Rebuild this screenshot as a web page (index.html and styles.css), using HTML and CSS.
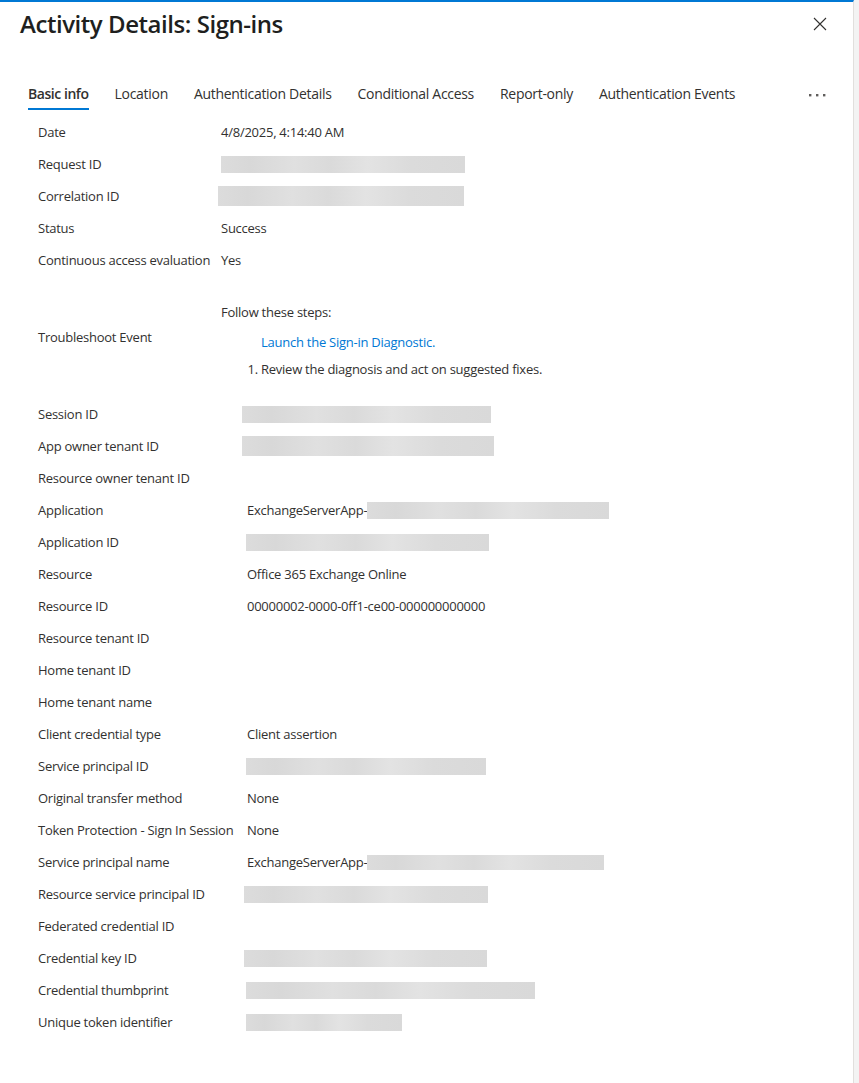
FILE: index.html
```
<!DOCTYPE html>
<html lang="en">
<head>
    <meta charset="UTF-8">
    <meta name="viewport" content="width=device-width, initial-scale=1.0">
    <title>Activity Details: Sign-ins</title>
    <link rel="stylesheet" href="styles.css">
</head>
<body>
    <div class="panel">
        <div class="panel-header">
            <h1 class="panel-title">Activity Details: Sign-ins</h1>
            <button class="close-btn" aria-label="Close">
                <svg width="14" height="14" viewBox="0 0 14 14"><path d="M1 1L13 13M13 1L1 13" stroke="#323130" stroke-width="1.1" fill="none"/></svg>
            </button>
        </div>

        <div class="tabs">
            <div class="tab active">Basic info</div>
            <div class="tab">Location</div>
            <div class="tab">Authentication Details</div>
            <div class="tab">Conditional Access</div>
            <div class="tab">Report-only</div>
            <div class="tab">Authentication Events</div>
            <button class="tab-more" aria-label="More">
                <svg width="17" height="3" viewBox="0 0 17 3"><rect x="0" y="0" width="2.4" height="2.4" fill="#605e5c"/><rect x="7" y="0" width="2.4" height="2.4" fill="#605e5c"/><rect x="14" y="0" width="2.4" height="2.4" fill="#605e5c"/></svg>
            </button>
        </div>

        <div class="details first">
            <div class="label">Date</div><div class="value">4/8/2025, 4:14:40 AM</div>
            <div class="label">Request ID</div><div class="value"><span class="redact" style="width:244px"></span></div>
            <div class="label">Correlation ID</div><div class="value"><span class="redact tall" style="width:246px; margin-left:-3px"></span></div>
            <div class="label">Status</div><div class="value">Success</div>
            <div class="label">Continuous access evaluation</div><div class="value">Yes</div>
        </div>

        <div class="troubleshoot">
            <div class="label">Troubleshoot Event</div>
            <div class="steps">
                <div>Follow these steps:</div>
                <a class="diag-link" href="#">Launch the Sign-in Diagnostic.</a>
                <ol>
                    <li>Review the diagnosis and act on suggested fixes.</li>
                </ol>
            </div>
        </div>

        <div class="details second">
            <div class="label">Session ID</div><div class="value"><span class="redact" style="width:249px; margin-left:-5px"></span></div>
            <div class="label">App owner tenant ID</div><div class="value"><span class="redact tall" style="width:252px; margin-left:-5px"></span></div>
            <div class="label">Resource owner tenant ID</div><div class="value"></div>
            <div class="label">Application</div><div class="value">ExchangeServerApp-<span class="redact" style="width:242px"></span></div>
            <div class="label">Application ID</div><div class="value"><span class="redact" style="width:243px; margin-left:-1px"></span></div>
            <div class="label">Resource</div><div class="value">Office 365 Exchange Online</div>
            <div class="label">Resource ID</div><div class="value">00000002-0000-0ff1-ce00-000000000000</div>
            <div class="label">Resource tenant ID</div><div class="value"></div>
            <div class="label">Home tenant ID</div><div class="value"></div>
            <div class="label">Home tenant name</div><div class="value"></div>
            <div class="label">Client credential type</div><div class="value">Client assertion</div>
            <div class="label">Service principal ID</div><div class="value"><span class="redact" style="width:240px; margin-left:-1px"></span></div>
            <div class="label">Original transfer method</div><div class="value">None</div>
            <div class="label">Token Protection - Sign In Session</div><div class="value">None</div>
            <div class="label">Service principal name</div><div class="value">ExchangeServerApp-<span class="redact thin" style="width:237px"></span></div>
            <div class="label">Resource service principal ID</div><div class="value"><span class="redact" style="width:244px; margin-left:-3px"></span></div>
            <div class="label">Federated credential ID</div><div class="value"></div>
            <div class="label">Credential key ID</div><div class="value"><span class="redact" style="width:243px; margin-left:-3px"></span></div>
            <div class="label">Credential thumbprint</div><div class="value"><span class="redact" style="width:289px; margin-left:-1px"></span></div>
            <div class="label">Unique token identifier</div><div class="value"><span class="redact" style="width:156px; margin-left:-1px"></span></div>
        </div>
    </div>
</body>
</html>
```

FILE: styles.css
```
body {
    margin: 0;
    background-color: #f3f3f3;
    font-family: "Segoe UI", "Open Sans", "Noto Sans", sans-serif;
    color: #323130;
    font-size: 13px;
    letter-spacing: -0.25px;
}
.panel {
    width: 854px;
    min-height: 1083px;
    box-sizing: border-box;
    background-color: #fff;
    border-top: 2px solid #0078d4;
    border-right: 1px solid #e1dfdd;
}
.panel-header {
    display: flex;
    justify-content: space-between;
    align-items: flex-start;
    padding: 7px 26px 0 20px;
}
.panel-title {
    margin: 0;
    font-size: 24px;
    font-weight: 600;
    line-height: 30px;
    letter-spacing: -0.45px;
    color: #201f1e;
}
.close-btn {
    border: none;
    background: none;
    padding: 0;
    margin-top: 8px;
    cursor: pointer;
}
.tabs {
    display: flex;
    align-items: center;
    margin-top: 45px;
    padding: 0 27px 0 28px;
}
.tab {
    font-size: 14px;
    line-height: 20px;
    padding: 0 0 4px;
    margin-right: 26px;
    border-bottom: 2px solid transparent;
    white-space: nowrap;
    letter-spacing: -0.3px;
}
.tab.active {
    font-weight: 600;
    border-bottom-color: #0078d4;
    letter-spacing: -0.45px;
}
.tab-more {
    margin-left: auto;
    border: none;
    background: none;
    padding: 0 0 10px;
    cursor: pointer;
}
.details {
    display: grid;
    grid-auto-rows: 32px;
    align-items: center;
    padding-left: 38px;
}
.details.first {
    grid-template-columns: 183px 1fr;
    margin-top: 6px;
}
.details.second {
    grid-template-columns: 209px 1fr;
    margin-top: 20px;
}
.label, .value {
    white-space: nowrap;
    line-height: 18px;
}
.value {
    display: flex;
    align-items: center;
}
.redact {
    display: inline-block;
    height: 17px;
    background: linear-gradient(90deg, #dcdcdc 0%, #d8d8d8 12%, #e0e0e0 30%, #dadada 45%, #e3e3e3 60%, #dbdbdb 78%, #d9d9d9 100%);
}
.redact.tall { height: 20px; }
.redact.thin { height: 15px; }
.troubleshoot {
    display: grid;
    grid-template-columns: 183px 1fr;
    align-items: center;
    padding-left: 38px;
    margin-top: 27px;
}
.troubleshoot .label {
    padding-bottom: 8px;
}
.steps {
    line-height: 18px;
}
.diag-link {
    display: block;
    margin: 12px 0 0 40px;
    color: #0078d4;
    text-decoration: none;
}
.steps ol {
    margin: 9px 0 0;
    padding-left: 40px;
}
```
